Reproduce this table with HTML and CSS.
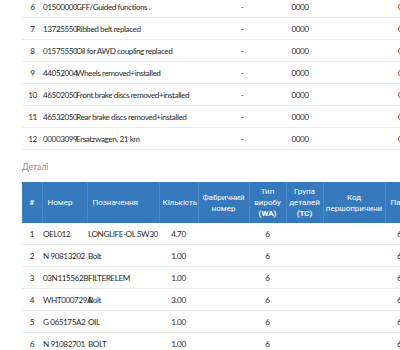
FILE: index.html
```html
<!DOCTYPE html>
<html>
<head>
<meta charset="utf-8">
<link rel="stylesheet" href="styles.css">
</head>
<body>
<div class="page">
  <table class="ops">
    <colgroup>
      <col class="c-num"><col class="c-code"><col class="c-desc"><col class="c-dash"><col class="c-zero"><col class="c-gap"><col class="c-last">
    </colgroup>
    <tbody>
      <tr><td class="num">6</td><td>01500000</td><td>GFF/Guided functions .</td><td class="ctr">-</td><td class="ctr">0000</td><td></td><td class="pl">0</td></tr>
      <tr><td class="num">7</td><td>13725550</td><td>Ribbed belt replaced</td><td class="ctr">-</td><td class="ctr">0000</td><td></td><td class="pl">0</td></tr>
      <tr><td class="num">8</td><td>01575550</td><td>Oil for AWD coupling replaced</td><td class="ctr">-</td><td class="ctr">0000</td><td></td><td class="pl">0</td></tr>
      <tr><td class="num">9</td><td>44052004</td><td>Wheels removed+installed</td><td class="ctr">-</td><td class="ctr">0000</td><td></td><td class="pl">0</td></tr>
      <tr><td class="num">10</td><td>46502050</td><td>Front brake discs removed+installed</td><td class="ctr">-</td><td class="ctr">0000</td><td></td><td class="pl">0</td></tr>
      <tr><td class="num">11</td><td>46532050</td><td>Rear brake discs removed+installed</td><td class="ctr">-</td><td class="ctr">0000</td><td></td><td class="pl">0</td></tr>
      <tr><td class="num">12</td><td>00003099</td><td>Ersatzwagen, 21 km</td><td class="ctr">-</td><td class="ctr">0000</td><td></td><td class="pl">0</td></tr>
    </tbody>
  </table>

  <div class="section-label">Деталі</div>

  <table class="parts">
    <colgroup>
      <col class="p-num"><col class="p-code"><col class="p-name"><col class="p-qty"><col class="p-fab"><col class="p-wa"><col class="p-tc"><col class="p-cause"><col class="p-last">
    </colgroup>
    <thead>
      <tr>
        <th class="hnum">#</th>
        <th class="hl">Номер</th>
        <th class="hl">Позначення</th>
        <th class="hq">Кількість</th>
        <th>Фабричний<br>номер</th>
        <th>Тип<br>виробу<br><b>(WA)</b></th>
        <th>Група<br>деталей<br><b>(TC)</b></th>
        <th>Код<br>першопричини</th>
        <th class="hl">Па</th>
      </tr>
    </thead>
    <tbody>
      <tr><td class="num">1</td><td>OEL012</td><td>LONGLIFE-OL 5W30</td><td class="ctr">4.70</td><td></td><td class="ctr">6</td><td></td><td></td><td class="pl">6</td></tr>
      <tr><td class="num">2</td><td>N 90813202</td><td>Bolt</td><td class="ctr">1.00</td><td></td><td class="ctr">6</td><td></td><td></td><td class="pl">6</td></tr>
      <tr><td class="num">3</td><td>03N115562B</td><td>FILTERELEM</td><td class="ctr">1.00</td><td></td><td class="ctr">6</td><td></td><td></td><td class="pl">6</td></tr>
      <tr><td class="num">4</td><td>WHT000729A</td><td>Bolt</td><td class="ctr">3.00</td><td></td><td class="ctr">6</td><td></td><td></td><td class="pl">6</td></tr>
      <tr><td class="num">5</td><td>G 065175A2</td><td>OIL</td><td class="ctr">1.00</td><td></td><td class="ctr">6</td><td></td><td></td><td class="pl">6</td></tr>
      <tr><td class="num">6</td><td>N 91082701</td><td>BOLT</td><td class="ctr">1.00</td><td></td><td class="ctr">6</td><td></td><td></td><td class="pl">6</td></tr>
    </tbody>
  </table>
</div>
</body>
</html>
```

FILE: styles.css
```css
html, body {
  margin: 0;
  padding: 0;
  background: #ffffff;
  overflow: hidden;
}

.page {
  width: 400px;
  height: 350px;
  overflow: hidden;
  padding-left: 22px;
  box-sizing: border-box;
  font-family: "Lato", "Open Sans", sans-serif;
  font-size: 8.2px;
  letter-spacing: -0.45px;
  color: #2c2c2c;
}

table {
  border-collapse: collapse;
  table-layout: fixed;
}

td {
  padding: 0;
  height: 21px;
  border-bottom: 1px solid #ebebeb;
  white-space: nowrap;
  overflow: visible;
  vertical-align: middle;
}

.ops {
  width: 436px;
  margin-top: -4px;
}

.c-num { width: 21px; }
.c-code { width: 33px; }
.c-desc { width: 146px; }
.c-dash { width: 40px; }
.c-zero { width: 76px; }
.c-gap { width: 60px; }
.c-last { width: 60px; }

.num {
  text-align: center;
}

.ctr {
  text-align: center;
}

.ops td.pl {
  padding-left: 0;
}

.section-label {
  height: 32px;
  line-height: 34px;
  color: #8a8a8a;
  font-size: 8.5px;
  letter-spacing: 0;
}

.parts {
  width: 423px;
}

.p-num { width: 20px; }
.p-code { width: 45px; }
.p-name { width: 72px; }
.p-qty { width: 39px; }
.p-fab { width: 51px; }
.p-wa { width: 37px; }
.p-tc { width: 37px; }
.p-cause { width: 62px; }
.p-last { width: 60px; }

.parts td:nth-child(2),
.parts td:nth-child(3) {
  padding-left: 1px;
}

.parts td.pl {
  padding-left: 12px;
}

.parts th {
  background: #3679bc;
  color: #ffffff;
  font-family: "Roboto", "Liberation Sans", sans-serif;
  font-weight: normal;
  font-size: 8px;
  letter-spacing: 0;
  line-height: 11px;
  height: 41px;
  padding: 0 2px;
  text-align: center;
  vertical-align: middle;
  border-left: 1px solid #4a8bcb;
  box-sizing: border-box;
}

.parts th:first-child {
  border-left: none;
}

.parts th b,
.parts th.hnum {
  font-weight: bold;
}

.parts th.hl {
  text-align: left;
  padding-left: 5px;
}

.parts th.hq {
  text-align: left;
  padding-left: 3px;
}
```
